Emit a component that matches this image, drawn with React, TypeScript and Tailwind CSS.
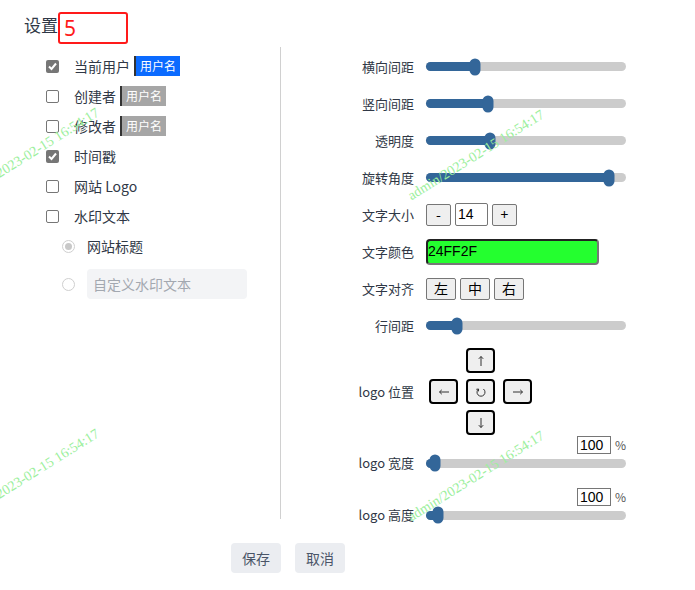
import React from 'react';

const cjk = "font-['Noto_Sans_CJK_SC','Noto_Sans',sans-serif]";
const latin = "font-['Liberation_Sans','Noto_Sans_CJK_SC',sans-serif]";

function Checkbox({ checked }: { checked?: boolean }) {
    if (checked) {
        return (
            <span className="flex h-[13px] w-[13px] items-center justify-center rounded-[2px] bg-[#767676]">
                <svg width="11" height="11" viewBox="0 0 11 11">
                    <polyline points="2,5.5 4.5,8 9,2.5" fill="none" stroke="white" strokeWidth="2" />
                </svg>
            </span>
        );
    }
    return <span className="h-[13px] w-[13px] rounded-[2px] border border-[#767676] bg-white" />;
}

function Radio({ checked }: { checked?: boolean }) {
    return (
        <span className="flex h-[13px] w-[13px] items-center justify-center rounded-full border border-[#cfcfcf] bg-white">
            {checked && <span className="h-[7px] w-[7px] rounded-full bg-[#c8c8c8]" />}
        </span>
    );
}

function Tag({ blue }: { blue?: boolean }) {
    return (
        <span
            className={
                blue
                    ? 'ml-[4px] flex h-[20px] items-center border-l-2 border-[#333] bg-[#0b6bff] px-[4px] text-[12px] text-white'
                    : 'ml-[4px] flex h-[20px] items-center border-l-2 border-[#333] bg-[#a6a6a6] px-[4px] text-[12px] text-white'
            }
        >
            用户名
        </span>
    );
}

function CheckRow({ label, checked, tag }: { label: string; checked?: boolean; tag?: 'blue' | 'gray' }) {
    return (
        <div className="flex h-[30px] items-center">
            <Checkbox checked={checked} />
            <span className="ml-[15px] text-[14px] text-[#303846]">{label}</span>
            {tag && <Tag blue={tag === 'blue'} />}
        </div>
    );
}

function Slider({ pos }: { pos: number }) {
    return (
        <div className="relative h-[9px] w-[200px] rounded-full bg-[#cccccc]">
            <div className="absolute left-0 top-0 h-full rounded-full bg-[#336699]" style={{ width: pos }} />
            <div
                className="absolute top-1/2 h-[17px] w-[11px] -translate-x-1/2 -translate-y-1/2 rounded-full bg-[#336699]"
                style={{ left: pos }}
            />
        </div>
    );
}

function Row({ label, children, h = 'h-[37px]' }: { label: string; children: React.ReactNode; h?: string }) {
    return (
        <div className={`flex items-center ${h}`}>
            <div className="w-[133px] text-right text-[13px] text-[#303846]">{label}</div>
            <div className="ml-[12px] flex items-center">{children}</div>
        </div>
    );
}

function SmallBtn({ children, w = 'w-[25px]' }: { children: React.ReactNode; w?: string }) {
    return (
        <span className={`flex h-[22px] ${w} items-center justify-center rounded-[2px] border border-[#767676] bg-[#efefef] text-[14px] text-black`}>
            {children}
        </span>
    );
}

// arrow glyphs for the logo position pad
const arrows: Record<string, React.ReactNode> = {
    up: <path d="M6 1.5V11M3.8 3.8L6 1.5L8.2 3.8" />,
    down: <path d="M6 1V10.5M3.8 8.2L6 10.5L8.2 8.2" />,
    left: <path d="M1.5 6H11M3.8 3.8L1.5 6L3.8 8.2" />,
    right: <path d="M1 6H10.5M8.2 3.8L10.5 6L8.2 8.2" />,
    reset: <path d="M3.6 3A4 4 0 1 0 8.4 3M3.6 3L3.4 5.4M3.6 3L1.3 3.3" />,
};

function PadBtn({ dir }: { dir: string }) {
    return (
        <span className="flex h-[25px] w-[29px] items-center justify-center rounded-[4px] border-2 border-black bg-[#efefef]">
            <svg width="12" height="12" viewBox="0 0 12 12" fill="none" stroke="#333" strokeWidth="1">
                {arrows[dir]}
            </svg>
        </span>
    );
}

function PercentRow() {
    return (
        <div className="flex h-[18px] items-center justify-end">
            <span className={`flex h-[18px] w-[34px] items-center border border-[#767676] pl-[2px] text-[14px] text-black ${latin}`}>100</span>
            <span className="ml-[4px] text-[12px] text-[#555]">%</span>
        </div>
    );
}

function Watermark({ pos }: { pos: string }) {
    return (
        <span
            className={`pointer-events-none absolute ${pos} -translate-x-1/2 -translate-y-1/2 -rotate-[32deg] whitespace-nowrap font-['Liberation_Serif',serif] text-[14px] text-[#9cef9c]`}
        >
            admin/2023-02-15 16:54:17
        </span>
    );
}

export default function App() {
    return (
        <div className={`relative h-[590px] w-[695px] overflow-hidden bg-white ${cjk}`}>
            <div className="flex items-center pl-[24px] pt-[12px]">
                <span className="mb-[6px] text-[17px] text-[#303846]">设置</span>
                <span className="flex h-[32px] w-[70px] items-start rounded-[3px] border-2 border-[#ff1a1a] pl-[4px] pt-[4px] font-['Noto_Sans',sans-serif] text-[21px] leading-none text-[#ff1a1a]">
                    5
                </span>
            </div>

            <div className="mt-[3px] flex pl-[24px]">
                <div className="w-[256px] pl-[22px] pt-[4px]">
                    <CheckRow label="当前用户" checked tag="blue" />
                    <CheckRow label="创建者" tag="gray" />
                    <CheckRow label="修改者" tag="gray" />
                    <CheckRow label="时间戳" checked />
                    <CheckRow label="网站 Logo" />
                    <CheckRow label="水印文本" />
                    <div className="pl-[16px]">
                        <div className="flex h-[30px] items-center">
                            <Radio checked />
                            <span className="ml-[12px] text-[14px] text-[#303846]">网站标题</span>
                        </div>
                        <div className="mt-[8px] flex items-center">
                            <Radio />
                            <div className="ml-[12px] flex h-[30px] w-[160px] items-center rounded-[4px] bg-[#f3f4f6] pl-[6px] text-[14px] text-[#a3a8b0]">
                                自定义水印文本
                            </div>
                        </div>
                    </div>
                </div>

                <div className="h-[472px] w-px bg-[#d0d0d0]" />

                <div className="pt-[1px]">
                    <Row label="横向间距"><Slider pos={49} /></Row>
                    <Row label="竖向间距"><Slider pos={62} /></Row>
                    <Row label="透明度"><Slider pos={64} /></Row>
                    <Row label="旋转角度"><Slider pos={183} /></Row>
                    <Row label="文字大小">
                        <SmallBtn>-</SmallBtn>
                        <span className={`ml-[4px] flex h-[23px] w-[33px] items-center rounded-[2px] border border-[#767676] pl-[2px] text-[14px] text-black ${latin}`}>14</span>
                        <span className="ml-[4px]"><SmallBtn>+</SmallBtn></span>
                    </Row>
                    <Row label="文字颜色">
                        <span className={`flex h-[26px] w-[173px] items-center rounded-[4px] border-2 border-t-[#222] border-l-[#222] border-b-[#777] border-r-[#777] bg-[#24ff2f] text-[14px] text-black ${latin}`}>
                            24FF2F
                        </span>
                    </Row>
                    <Row label="文字对齐">
                        <span className="flex gap-[4px]">
                            <SmallBtn w="w-[30px]">左</SmallBtn>
                            <SmallBtn w="w-[30px]">中</SmallBtn>
                            <SmallBtn w="w-[30px]">右</SmallBtn>
                        </span>
                    </Row>
                    <Row label="行间距"><Slider pos={31} /></Row>
                    <div className="mt-[4px]">
                        <Row label="logo 位置" h="h-[87px]">
                            <div className="ml-[3px] grid grid-cols-[29px_29px_29px] gap-x-[8px] gap-y-[6px]">
                                <span />
                                <PadBtn dir="up" />
                                <span />
                                <PadBtn dir="left" />
                                <PadBtn dir="reset" />
                                <PadBtn dir="right" />
                                <span />
                                <PadBtn dir="down" />
                                <span />
                            </div>
                        </Row>
                    </div>
                    <div className="mt-[1px]">
                        <PercentRow />
                        <Row label="logo 宽度" h="h-[18px]"><Slider pos={9} /></Row>
                    </div>
                    <div className="mt-[16px]">
                        <PercentRow />
                        <Row label="logo 高度" h="h-[18px]"><Slider pos={12} /></Row>
                    </div>
                </div>
            </div>

            <div className="mt-[19px] flex gap-[14px] pl-[231px]">
                <span className="flex h-[30px] w-[50px] items-center justify-center rounded-[4px] bg-[#ebedf1] text-[14px] text-[#4a5568]">保存</span>
                <span className="flex h-[30px] w-[50px] items-center justify-center rounded-[4px] bg-[#ebedf1] text-[14px] text-[#4a5568]">取消</span>
            </div>

            <Watermark pos="left-[31px] top-[153px]" />
            <Watermark pos="left-[476px] top-[155px]" />
            <Watermark pos="left-[31px] top-[474px]" />
            <Watermark pos="left-[476px] top-[476px]" />
        </div>
    );
}
